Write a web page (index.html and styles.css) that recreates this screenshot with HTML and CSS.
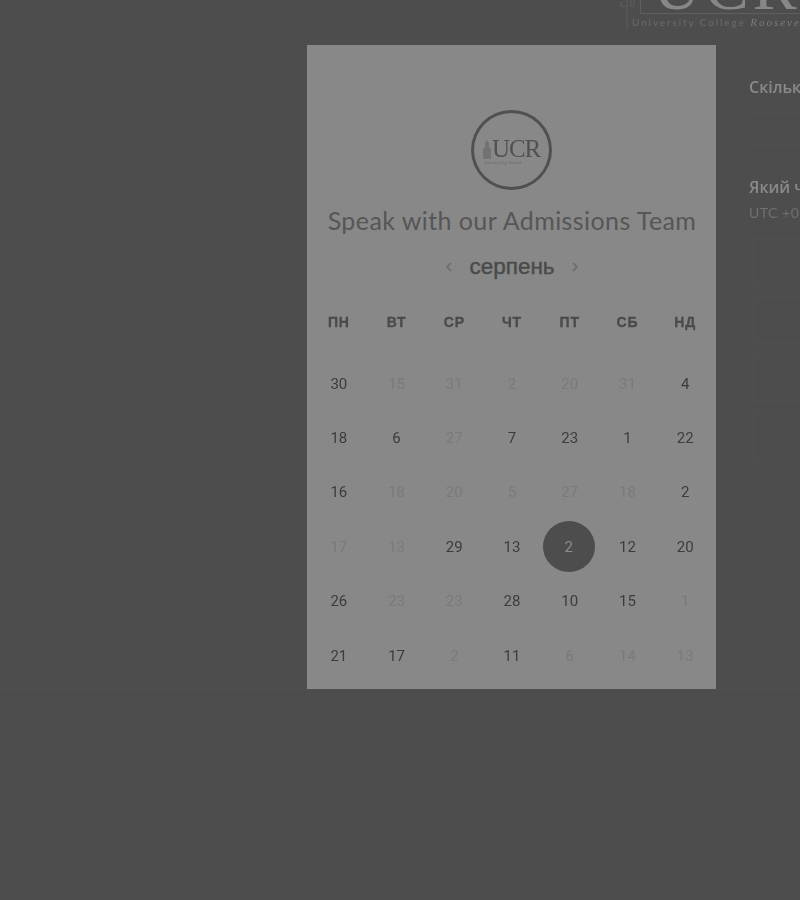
FILE: index.html
```html
<!DOCTYPE html>
<html lang="uk">
<head>
<meta charset="utf-8">
<title>Speak with our Admissions Team</title>
<link rel="stylesheet" href="styles.css">
</head>
<body>
<div class="page">
  <header class="topbar">
    <div class="brand">
      <svg class="brand-tower" width="20" height="32" viewBox="0 0 20 32"><path d="M7 0V30M1 2V6H6M11 0V6H14V0" fill="none" stroke="#5f5f5f"/></svg>
      <div class="brand-main">
        <div class="brand-letters"><div class="brand-letters-in">UCR</div></div>
        <div class="brand-sub">University College <span class="brand-sub-r">Roosevelt</span></div>
      </div>
    </div>
  </header>
  <main class="main">
    <div class="spacer"></div>
    <section class="panel">
      <div class="logo">
        <svg class="logo-tower" width="10" height="20" viewBox="0 0 10 20"><path d="M1 20V10L3 8V4L5 1L7 4V8L9 10V20Z" fill="#727272"/></svg>
        <div class="logo-text">
          <div class="logo-letters">UCR</div>
          <div class="logo-sub">University College Roosevelt</div>
        </div>
      </div>
      <h1 class="title">Speak with our Admissions Team</h1>
      <div class="month">
        <svg class="chev" width="10" height="12" viewBox="0 0 10 12"><path d="M7 2L3 6L7 10" fill="none" stroke="#6b6b6b" stroke-width="1.6"/></svg>
        <span class="month-name">серпень</span>
        <svg class="chev" width="10" height="12" viewBox="0 0 10 12"><path d="M3 2L7 6L3 10" fill="none" stroke="#6b6b6b" stroke-width="1.6"/></svg>
      </div>
      <div class="weekdays">
        <span>ПН</span><span>ВТ</span><span>СР</span><span>ЧТ</span><span>ПТ</span><span>СБ</span><span>НД</span>
      </div>
      <div class="days">
        <span class="day on">30</span><span class="day">15</span><span class="day">31</span><span class="day">2</span><span class="day">20</span><span class="day">31</span><span class="day on">4</span>
        <span class="day on">18</span><span class="day on">6</span><span class="day">27</span><span class="day on">7</span><span class="day on">23</span><span class="day on">1</span><span class="day on">22</span>
        <span class="day on">16</span><span class="day">18</span><span class="day">20</span><span class="day">5</span><span class="day">27</span><span class="day">18</span><span class="day on">2</span>
        <span class="day">17</span><span class="day">13</span><span class="day on">29</span><span class="day on">13</span><span class="day selected"><span class="dot">2</span></span><span class="day on">12</span><span class="day on">20</span>
        <span class="day on">26</span><span class="day">23</span><span class="day">23</span><span class="day on">28</span><span class="day on">10</span><span class="day on">15</span><span class="day">1</span>
        <span class="day on">21</span><span class="day on">17</span><span class="day">2</span><span class="day on">11</span><span class="day">6</span><span class="day">14</span><span class="day">13</span>
      </div>
    </section>
    <aside class="side">
      <div class="side-label">Скільки часу вам потрібно?</div>
      <div class="field"></div>
      <div class="side-label side-label-second">Який час вам підходить?</div>
      <div class="tz">UTC +0:00</div>
      <div class="slots">
        <div class="slot"></div>
        <div class="slot"></div>
        <div class="slot"></div>
        <div class="slot"></div>
      </div>
    </aside>
  </main>
</div>
</body>
</html>
```

FILE: styles.css
```css
html, body {
  margin: 0;
  padding: 0;
  background: #4d4d4d;
}
.page {
  width: 800px;
  height: 900px;
  overflow: hidden;
  filter: blur(0.5px);
}
.topbar {
  height: 45px;
  display: flex;
  justify-content: flex-end;
  overflow: hidden;
}
.brand {
  width: 180px;
  flex: none;
  display: flex;
}
.brand-tower {
  flex: none;
}
.brand-main {
  flex: none;
  width: 200px;
}
.brand-letters {
  height: 14px;
  box-sizing: border-box;
  padding-left: 12px;
  border-left: 1px solid #5f5f5f;
  border-bottom: 1px solid #5f5f5f;
  overflow: hidden;
}
.brand-letters-in {
  margin-top: -21px;
  font: 66px/16px "Liberation Serif", serif;
  letter-spacing: 4px;
  white-space: nowrap;
  color: #878787;
}
.brand-sub {
  margin: 2px 0 0 -8px;
  font: 10px/13px "Lato", sans-serif;
  letter-spacing: 1.9px;
  white-space: nowrap;
  color: #6c6c6c;
}
.brand-sub-r {
  font: italic 11px/13px "Liberation Serif", serif;
  letter-spacing: 2px;
  color: #7c7c7c;
}
.main {
  display: flex;
  height: 644px;
  border-bottom: 1px solid #505050;
}
.spacer {
  width: 307px;
  flex: none;
}
.panel {
  width: 409px;
  height: 644px;
  flex: none;
  box-sizing: border-box;
  padding: 65px 2px 0 3px;
  background: #888888;
  color: #4c4c4c;
}
.logo {
  width: 81px;
  height: 80px;
  box-sizing: border-box;
  margin: 0 auto;
  position: relative;
  left: -1px;
  border: 3px solid #505050;
  border-radius: 50%;
  display: flex;
  align-items: center;
  justify-content: center;
}
.logo-tower {
  flex: none;
  margin-top: -2px;
}
.logo-text {
  margin-top: 2px;
}
.logo-letters {
  font: 25px/24px "Liberation Serif", serif;
  letter-spacing: -1.2px;
  color: #505050;
}
.logo-sub {
  width: 50px;
  margin-left: -8px;
  font: 3px/4px "Lato", sans-serif;
  white-space: nowrap;
  color: #6a6a6a;
}
.title {
  margin: 14px 0 0;
  text-align: center;
  font: 400 25px/32px "Lato", sans-serif;
  letter-spacing: 0.42px;
  color: #565656;
  white-space: nowrap;
}
.month {
  margin-top: 17px;
  height: 28px;
  display: flex;
  align-items: center;
  justify-content: center;
  gap: 15px;
}
.month-name {
  font: 400 22.5px/28px "Liberation Sans", sans-serif;
  color: #4a4a4a;
  -webkit-text-stroke: 0.4px #4a4a4a;
}
.weekdays {
  margin-top: 31px;
  display: grid;
  grid-template-columns: repeat(7, 1fr);
  text-align: center;
  font: 700 14px/20px "Liberation Sans", sans-serif;
  letter-spacing: 0.8px;
  color: #4a4a4a;
  -webkit-text-stroke: 0.3px #4a4a4a;
}
.days {
  margin-top: 24.5px;
  display: grid;
  grid-template-columns: repeat(7, 1fr);
  grid-auto-rows: 54.4px;
  text-align: center;
  font: 400 15px/20px "Roboto", sans-serif;
  color: #7a7a7a;
}
.day {
  display: flex;
  align-items: center;
  justify-content: center;
}
.day.on {
  color: #3c3c3c;
}
.dot {
  width: 52px;
  height: 51px;
  margin-right: 2px;
  display: flex;
  align-items: center;
  justify-content: center;
  border-radius: 50%;
  background: #4d4d4d;
  color: #8c8c8c;
}
.side {
  width: 300px;
  flex: none;
  box-sizing: border-box;
  margin-left: 33px;
  padding-top: 32px;
  white-space: nowrap;
}
.side-label {
  font: 600 16px/20px "Open Sans", sans-serif;
  color: #8a8a8a;
}
.side-label-second {
  margin-top: 32px;
}
.field {
  margin-top: 16px;
  height: 30px;
  border: 1px solid #505050;
  border-radius: 2px;
}
.tz {
  margin-top: 6px;
  font: 400 14px/20px "Lato", sans-serif;
  letter-spacing: 0.5px;
  color: #707070;
}
.slots {
  margin: 15px 0 0 4px;
  display: flex;
  flex-direction: column;
  gap: 10px;
}
.slot {
  height: 46px;
  border: 1px solid #505050;
}
```
